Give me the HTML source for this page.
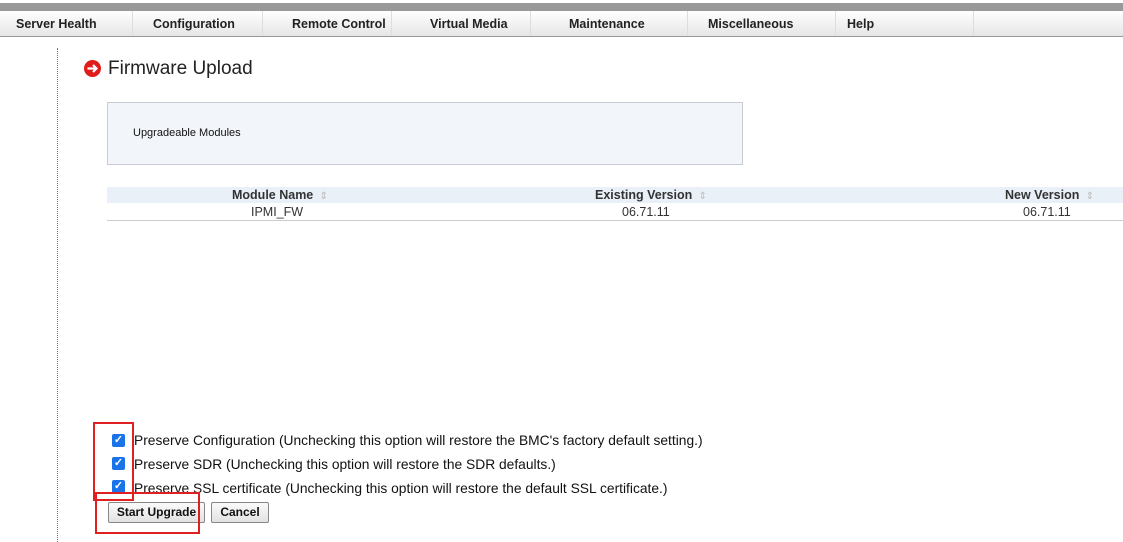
<!DOCTYPE html>
<html><head><style>
body{margin:0;width:1123px;height:542px;background:#fff;font-family:"Liberation Sans",Arial,sans-serif;position:relative;overflow:hidden;color:#111}
.a{position:absolute}
.nav{top:11px;left:0;width:1123px;height:25px;background:linear-gradient(#fff,#e6e6e6);border-bottom:1px solid #999}
.nav span{position:absolute;top:6px;font-size:12.5px;font-weight:bold;color:#222}
.sep{position:absolute;top:0;width:1px;height:25px;background:#ddd}
.cb{width:13px;height:13px;background:#1a73e8;border-radius:2px;color:#fff;font-size:11px;line-height:13px;text-align:center;font-weight:bold}
.lbl{font-size:13.8px;color:#111;white-space:nowrap}
.btn{top:502px;height:19px;border:1px solid #888;background:linear-gradient(#fafafa,#e2e2e2);border-radius:2px;font-size:12px;font-weight:bold;line-height:19px;text-align:center}
.red{border:2px solid #e02020}
</style></head><body>
<div class="a" style="top:3px;left:0;width:1123px;height:8px;background:#999"></div>
<div class="a nav">
<span style="left:16px">Server Health</span><div class="sep" style="left:132px"></div>
<span style="left:153px">Configuration</span><div class="sep" style="left:262px"></div>
<span style="left:292px">Remote Control</span><div class="sep" style="left:391px"></div>
<span style="left:430px">Virtual Media</span><div class="sep" style="left:530px"></div>
<span style="left:569px">Maintenance</span><div class="sep" style="left:687px"></div>
<span style="left:708px">Miscellaneous</span><div class="sep" style="left:835px"></div>
<span style="left:847px">Help</span><div class="sep" style="left:973px"></div>
</div>
<div class="a" style="left:57px;top:48px;height:494px;border-left:1px dotted #777"></div>
<svg class="a" style="left:84px;top:60px" width="17" height="17" viewBox="0 0 17 17"><circle cx="8.5" cy="8.5" r="8.5" fill="#e01b1b"/><path d="M3.5 8.5H12M9 5l3.5 3.5L9 12" stroke="#fff" stroke-width="2.2" fill="none"/></svg>
<div class="a" style="left:108px;top:58px;font-size:19px;color:#222">Firmware Upload</div>
<div class="a" style="left:107px;top:102px;width:634px;height:61px;background:#f2f5fa;border:1px solid #c8ccd4"></div>
<div class="a" style="left:133px;top:127px;font-size:11px">Upgradeable Modules</div>
<div class="a" style="left:107px;top:187px;width:1016px;height:16px;background:#e9f0f8"></div>
<div class="a" style="left:107px;top:220px;width:1016px;height:1px;background:#ccc"></div>
<div class="a" style="left:232px;top:188px;font-size:12.5px;font-weight:bold;color:#333">Module Name <span style="color:#bbb;font-weight:normal;font-size:10px">&nbsp;⇕</span></div>
<div class="a" style="left:595px;top:188px;font-size:12.5px;font-weight:bold;color:#333">Existing Version <span style="color:#bbb;font-weight:normal;font-size:10px">&nbsp;⇕</span></div>
<div class="a" style="left:1005px;top:188px;font-size:12.5px;font-weight:bold;color:#333">New Version <span style="color:#bbb;font-weight:normal;font-size:10px">&nbsp;⇕</span></div>
<div class="a" style="left:251px;top:205px;font-size:12.5px;color:#333">IPMI_FW</div>
<div class="a" style="left:622px;top:205px;font-size:12.5px;color:#333">06.71.11</div>
<div class="a" style="left:1023px;top:205px;font-size:12.5px;color:#333">06.71.11</div>
<div class="a cb" style="left:112px;top:434px">✓</div>
<div class="a cb" style="left:112px;top:457px">✓</div>
<div class="a cb" style="left:112px;top:480px">✓</div>
<div class="a lbl" style="left:134px;top:433px">Preserve Configuration (Unchecking this option will restore the BMC's factory default setting.)</div>
<div class="a lbl" style="left:134px;top:457px">Preserve SDR (Unchecking this option will restore the SDR defaults.)</div>
<div class="a lbl" style="left:134px;top:481px">Preserve SSL certificate (Unchecking this option will restore the default SSL certificate.)</div>
<div class="a btn" style="left:108px;width:95px">Start Upgrade</div>
<div class="a btn" style="left:211px;width:56px">Cancel</div>
<div class="a red" style="left:93px;top:422px;width:37px;height:75px"></div>
<div class="a red" style="left:95px;top:492px;width:101px;height:38px"></div>
</body></html>
